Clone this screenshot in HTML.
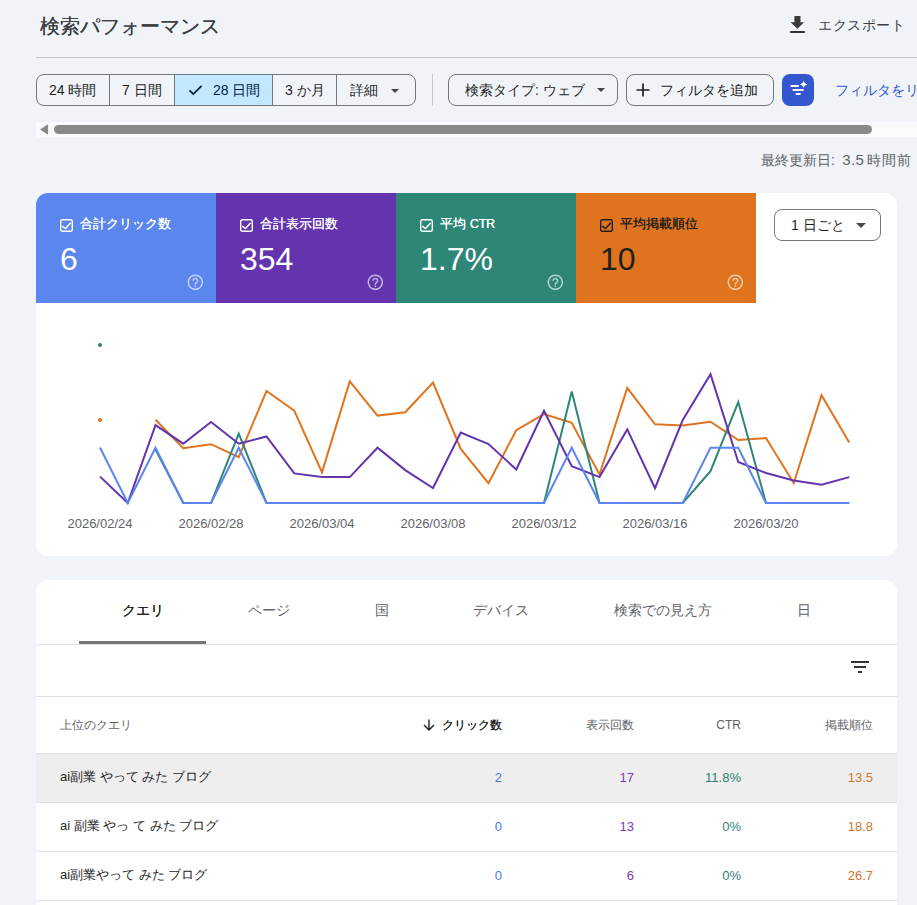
<!DOCTYPE html>
<html><head><meta charset="utf-8">
<style>
*{box-sizing:border-box;margin:0;padding:0}
html,body{width:917px;height:905px;overflow:hidden;background:#f0f4f9;font-family:"Liberation Sans",sans-serif;color:#1f1f1f}
.a{position:absolute;white-space:nowrap}
.title{left:40px;top:14px;font-size:20px;color:#3c4043;line-height:24px;text-shadow:0.3px 0 0 currentColor}
.export{left:818px;top:16px;font-size:14px;color:#3c4043;line-height:18px;letter-spacing:0.6px}
.hr{left:36px;top:57px;width:881px;height:1px;background:#c7c7c7}
.seg{top:74px;height:32px;border:1px solid #747775;border-radius:8px;left:36px;width:380px}
.ct{top:80px;font-size:14px;line-height:20px;color:#1f1f1f}
.chip{top:74px;height:32px;border:1px solid #747775;border-radius:8px;font-size:14px;line-height:30px;color:#1f1f1f}
.tri{position:absolute;width:0;height:0;border-left:5px solid transparent;border-right:5px solid transparent;border-top:5px solid #444746}
.tri.sm{border-left-width:4px;border-right-width:4px;border-top-width:4px}
.card{background:#fff;border-radius:12px}
.m{position:absolute;top:193px;width:180px;height:110px;color:#fff}
.m .lbl{position:absolute;left:43px;top:216px}
.cb{position:absolute;width:13px;height:13px;border:1.5px solid #fff;border-radius:2px}
.hrow{position:absolute;left:36px;width:861px;height:1px;background:#e0e0e0}
.mlbl{top:215px;font-size:13px;line-height:18px;text-shadow:0.45px 0 0 currentColor}
.mnum{top:242px;font-size:32px;line-height:34px}
.tab{top:600px;font-size:14px;line-height:20px;text-align:center;color:#5f6368}
.th{top:717px;font-size:12px;line-height:16px;color:#5f6368}
.td{font-size:13px;line-height:18px;color:#1f1f1f}
.num{font-size:13px;text-align:right}
</style></head><body>
<div class="a title">検索パフォーマンス</div>
<svg class="a" style="left:790px;top:16px" width="15" height="17" viewBox="0 0 15 17"><path d="M4.4 0h6.1v6.2h3.6L7.4 12.7L0.5 6.2h3.9z" fill="#3a3a3a"/><rect x="0.2" y="15" width="14.6" height="2" fill="#333"/></svg>
<div class="a export">エクスポート</div>
<div class="a hr"></div>

<div class="a seg"></div>
<div class="a" style="left:175px;top:75px;width:97px;height:30px;background:#c2e7ff"></div>
<div class="a" style="left:109px;top:75px;width:1px;height:30px;background:#747775"></div>
<div class="a" style="left:174px;top:75px;width:1px;height:30px;background:#747775"></div>
<div class="a" style="left:272px;top:75px;width:1px;height:30px;background:#747775"></div>
<div class="a" style="left:336px;top:75px;width:1px;height:30px;background:#747775"></div>
<div class="a ct" style="left:49px">24 時間</div>
<div class="a ct" style="left:122px">7 日間</div>
<svg class="a" style="left:188px;top:84px" width="15" height="12" viewBox="0 0 15 12"><path d="M1.5 6.3l3.8 3.8L13.6 1.8" fill="none" stroke="#041e49" stroke-width="1.8"/></svg>
<div class="a ct" style="left:213px;color:#041e49">28 日間</div>
<div class="a ct" style="left:285px">3 か月</div>
<div class="a ct" style="left:350px">詳細</div>
<i class="tri sm a" style="left:390.5px;top:88.5px"></i>
<div class="a" style="left:432px;top:74px;width:1px;height:32px;background:#c7c7c7"></div>
<div class="a chip" style="left:448px;width:170px"></div>
<div class="a ct" style="left:465px">検索タイプ: ウェブ</div>
<i class="tri sm a" style="left:597px;top:88px"></i>
<div class="a chip" style="left:626px;width:148px"></div>
<svg class="a" style="left:636px;top:83px" width="14" height="14" viewBox="0 0 14 14"><path d="M7 0.5v13M0.5 7h13" fill="none" stroke="#1f1f1f" stroke-width="1.7"/></svg>
<div class="a ct" style="left:660px">フィルタを追加</div>
<div class="a" style="left:782px;top:74px;width:32px;height:32px;border-radius:8px;background:#3457d0"></div>
<svg class="a" style="left:782px;top:74px" width="32" height="32" viewBox="0 0 32 32"><rect x="8.6" y="11" width="8.2" height="2" fill="#fff"/><rect x="10.6" y="15" width="11" height="1.9" fill="#fff"/><rect x="13.7" y="19" width="4.9" height="2" fill="#fff"/><path d="M21.6 6.6Q22.2 9.8 25.4 10.4Q22.2 11 21.6 14.2Q21 11 17.8 10.4Q21 9.8 21.6 6.6z" fill="#fff"/></svg>
<div class="a ct" style="left:835px;color:#3457d0">フィルタをリセット</div>

<div class="a" style="left:36px;top:122px;width:881px;height:15px;background:#fafafa"></div>
<svg class="a" style="left:39px;top:124px" width="10" height="11" viewBox="0 0 10 11"><path d="M8.5 1.2v8.6L2 5.5z" fill="#8a8a8a" stroke="#8a8a8a" stroke-width="1.2" stroke-linejoin="round"/></svg>
<div class="a" style="left:54px;top:125px;width:818px;height:9px;border-radius:4.5px;background:#8a8a8a"></div>

<div class="a" style="left:761px;top:151px;font-size:14px;line-height:18px;color:#5f6368">最終更新日: <span style="font-size:15px;letter-spacing:0.4px;margin-left:3.5px;margin-right:-1px">3.5</span> <span style="letter-spacing:1.1px">時間前</span></div>

<div class="a card" style="left:36px;top:193px;width:861px;height:363px"></div>
<div class="m" style="left:36px;background:#5a86ee;border-top-left-radius:12px"></div>
<div class="m" style="left:216px;background:#6334ad"></div>
<div class="m" style="left:396px;background:#2d8676"></div>
<div class="m" style="left:576px;background:#e0731d"></div>


<!-- metric cards content -->
<svg class="a" style="left:60px;top:219px" width="13" height="13" viewBox="0 0 13 13"><rect x="0.7" y="0.7" width="11.6" height="11.6" rx="1.6" fill="none" stroke="#fff" stroke-width="1.4"/><path d="M2.3 7.1L5.5 9.6L10.8 3.7" fill="none" stroke="#fff" stroke-width="1.5"/></svg>
<div class="a mlbl" style="left:80px;color:#fff">合計クリック数</div>
<div class="a mnum" style="left:60px;color:#fff">6</div>
<svg class="a" style="left:185.6px;top:272.6px" width="18.7" height="18.7" viewBox="0 0 24 24"><path fill="rgba(255,255,255,.62)" d="M11 18h2v-2h-2v2zm1-16C6.48 2 2 6.48 2 12s4.48 10 10 10 10-4.48 10-10S17.52 2 12 2zm0 18c-4.41 0-8-3.59-8-8s3.59-8 8-8 8 3.59 8 8-3.59 8-8 8zm0-14c-2.21 0-4 1.790-4 4h2c0-1.1.9-2 2-2s2 .9 2 2c0 2-3 1.750-3 5h2c0-2.25 3-2.5 3-5 0-2.21-1.79-4-4-4z"/></svg>

<svg class="a" style="left:240px;top:219px" width="13" height="13" viewBox="0 0 13 13"><rect x="0.7" y="0.7" width="11.6" height="11.6" rx="1.6" fill="none" stroke="#fff" stroke-width="1.4"/><path d="M2.3 7.1L5.5 9.6L10.8 3.7" fill="none" stroke="#fff" stroke-width="1.5"/></svg>
<div class="a mlbl" style="left:260px;color:#fff">合計表示回数</div>
<div class="a mnum" style="left:240px;color:#fff">354</div>
<svg class="a" style="left:365.6px;top:272.6px" width="18.7" height="18.7" viewBox="0 0 24 24"><path fill="rgba(255,255,255,.62)" d="M11 18h2v-2h-2v2zm1-16C6.48 2 2 6.48 2 12s4.48 10 10 10 10-4.48 10-10S17.52 2 12 2zm0 18c-4.41 0-8-3.59-8-8s3.59-8 8-8 8 3.59 8 8-3.59 8-8 8zm0-14c-2.21 0-4 1.790-4 4h2c0-1.1.9-2 2-2s2 .9 2 2c0 2-3 1.750-3 5h2c0-2.25 3-2.5 3-5 0-2.21-1.79-4-4-4z"/></svg>

<svg class="a" style="left:420px;top:219px" width="13" height="13" viewBox="0 0 13 13"><rect x="0.7" y="0.7" width="11.6" height="11.6" rx="1.6" fill="none" stroke="#fff" stroke-width="1.4"/><path d="M2.3 7.1L5.5 9.6L10.8 3.7" fill="none" stroke="#fff" stroke-width="1.5"/></svg>
<div class="a mlbl" style="left:440px;color:#fff">平均 <span style="font-size:12.5px;letter-spacing:-0.2px">CTR</span></div>
<div class="a mnum" style="left:420px;color:#fff">1.7%</div>
<svg class="a" style="left:545.6px;top:272.6px" width="18.7" height="18.7" viewBox="0 0 24 24"><path fill="rgba(255,255,255,.62)" d="M11 18h2v-2h-2v2zm1-16C6.48 2 2 6.48 2 12s4.48 10 10 10 10-4.48 10-10S17.52 2 12 2zm0 18c-4.41 0-8-3.59-8-8s3.59-8 8-8 8 3.59 8 8-3.59 8-8 8zm0-14c-2.21 0-4 1.790-4 4h2c0-1.1.9-2 2-2s2 .9 2 2c0 2-3 1.750-3 5h2c0-2.25 3-2.5 3-5 0-2.21-1.79-4-4-4z"/></svg>

<svg class="a" style="left:600px;top:219px" width="13" height="13" viewBox="0 0 13 13"><rect x="0.7" y="0.7" width="11.6" height="11.6" rx="1.6" fill="none" stroke="#1f1f1f" stroke-width="1.4"/><path d="M2.3 7.1L5.5 9.6L10.8 3.7" fill="none" stroke="#1f1f1f" stroke-width="1.5"/></svg>
<div class="a mlbl" style="left:620px;color:#1f1f1f">平均掲載順位</div>
<div class="a mnum" style="left:600px;color:#1f1f1f">10</div>
<svg class="a" style="left:725.6px;top:272.6px" width="18.7" height="18.7" viewBox="0 0 24 24"><path fill="rgba(255,255,255,.62)" d="M11 18h2v-2h-2v2zm1-16C6.48 2 2 6.48 2 12s4.48 10 10 10 10-4.48 10-10S17.52 2 12 2zm0 18c-4.41 0-8-3.59-8-8s3.59-8 8-8 8 3.59 8 8-3.59 8-8 8zm0-14c-2.21 0-4 1.790-4 4h2c0-1.1.9-2 2-2s2 .9 2 2c0 2-3 1.750-3 5h2c0-2.25 3-2.5 3-5 0-2.21-1.79-4-4-4z"/></svg>

<svg class="a" style="left:0;top:0" width="917" height="560" viewBox="0 0 917 560">
<g fill="none" stroke-width="2" stroke-linejoin="miter" stroke-linecap="butt">
<polyline points="155.50,419.8 183.25,448.3 211.00,444.2 238.75,457.1 266.50,391.0 294.25,410.6 322.00,472.3 349.75,381.4 377.50,415.6 405.25,412.3 433.00,382.5 460.75,449.0 488.50,483.2 516.25,430.2 544.00,414.1 571.75,422.8 599.50,474.5 627.25,387.9 655.00,424.3 682.75,425.4 710.50,421.7 738.25,440.0 766.00,438.0 793.75,483.2 821.50,395.3 849.25,442.4" stroke="#e0731d"/>
<polyline points="155.50,449.6 183.25,503 211.00,503 238.75,433.7 266.50,503 294.25,503 322.00,503 349.75,503 377.50,503 405.25,503 433.00,503 460.75,503 488.50,503 516.25,503 544.00,503 571.75,391.6 599.50,503 627.25,503 655.00,503 682.75,503 710.50,471.2 738.25,402.1 766.00,503 793.75,503 821.50,503 849.25,503" stroke="#2d8676"/>
<polyline points="100.00,476.6 127.75,503 155.50,425.1 183.25,443.7 211.00,421.9 238.75,443.7 266.50,436.5 294.25,473.4 322.00,477.1 349.75,477.1 377.50,447.7 405.25,470.1 433.00,488.0 460.75,432.6 488.50,444.0 516.25,469.5 544.00,410.8 571.75,466.2 599.50,477.1 627.25,429.4 655.00,488.2 682.75,420.0 710.50,374.2 738.25,462.0 766.00,473.0 793.75,480.4 821.50,484.8 849.25,477.1" stroke="#6334ad"/>
<polyline points="100.00,447.5 127.75,503 155.50,447.8 183.25,503 211.00,503 238.75,447.8 266.50,503 294.25,503 322.00,503 349.75,503 377.50,503 405.25,503 433.00,503 460.75,503 488.50,503 516.25,503 544.00,503 571.75,447.7 599.50,503 627.25,503 655.00,503 682.75,503 710.50,447.7 738.25,447.7 766.00,503 793.75,503 821.50,503 849.25,503" stroke="#5a86ee"/>
</g>
<circle cx="100" cy="420" r="2.1" fill="#e0731d"/>
<circle cx="100" cy="345" r="2.1" fill="#2d8676"/>
<g font-family="Liberation Sans" font-size="13" fill="#5f6368" text-anchor="middle">
<text x="100.00" y="528">2026/02/24</text>
<text x="211.00" y="528">2026/02/28</text>
<text x="322.00" y="528">2026/03/04</text>
<text x="433.00" y="528">2026/03/08</text>
<text x="544.00" y="528">2026/03/12</text>
<text x="655.00" y="528">2026/03/16</text>
<text x="766.00" y="528">2026/03/20</text>
</g></svg>
<div class="a chip" style="left:774px;top:209px;width:107px;height:32px"><span style="position:absolute;left:16px">1 日ごと</span><i class="tri" style="left:81px;top:13px"></i></div>

<div class="a card" style="left:36px;top:580px;width:861px;height:340px"></div>

<!-- table -->
<div class="a tab" style="left:79px;width:127px;color:#1f1f1f;text-shadow:0.45px 0 0 currentColor">クエリ</div>
<div class="a tab" style="left:205.5px;width:127px">ページ</div>
<div class="a tab" style="left:332.5px;width:99px">国</div>
<div class="a tab" style="left:430.5px;width:141px">デバイス</div>
<div class="a tab" style="left:571.5px;width:183px">検索での見え方</div>
<div class="a tab" style="left:754.5px;width:99px">日</div>
<div class="a" style="left:79px;top:641px;width:127px;height:3px;background:#757575"></div>
<div class="hrow" style="top:644px"></div>
<svg class="a" style="left:851px;top:660px" width="18" height="14" viewBox="0 0 18 14"><rect x="0" y="1" width="18" height="2" fill="#333"/><rect x="3" y="6" width="12" height="2" fill="#333"/><rect x="7" y="11" width="4" height="2" fill="#333"/></svg>
<div class="hrow" style="top:696px"></div>
<div class="a th" style="left:60px">上位のクエリ</div>
<svg class="a" style="left:423px;top:719px" width="12" height="12" viewBox="0 0 12 12"><path d="M6 0.5v10.3M1 5.9L6 10.9l5-5" fill="none" stroke="#1f1f1f" stroke-width="1.4"/></svg>
<div class="a th" style="right:415px;color:#1f1f1f;text-shadow:0.45px 0 0 currentColor">クリック数</div>
<div class="a th" style="right:283px">表示回数</div>
<div class="a th" style="right:176px">CTR</div>
<div class="a th" style="right:44px">掲載順位</div>
<div class="hrow" style="top:753px"></div>
<div class="a" style="left:36px;top:754px;width:861px;height:48px;background:#eeeeee"></div>
<div class="hrow" style="top:802px"></div>
<div class="hrow" style="top:851px"></div>
<div class="hrow" style="top:900px"></div>
<div class="a td" style="left:60px;top:768px">ai副業 やって みた ブログ</div>
<div class="a td" style="right:415px;top:769px;color:#4677dd">2</div>
<div class="a td" style="right:283px;top:769px;color:#7b3bb5">17</div>
<div class="a td" style="right:176px;top:769px;color:#2d8070">11.8%</div>
<div class="a td" style="right:44px;top:769px;color:#cf772c">13.5</div>
<div class="a td" style="left:60px;top:817px">ai 副業 やっ て みた ブログ</div>
<div class="a td" style="right:415px;top:818px;color:#4677dd">0</div>
<div class="a td" style="right:283px;top:818px;color:#7b3bb5">13</div>
<div class="a td" style="right:176px;top:818px;color:#2d8070">0%</div>
<div class="a td" style="right:44px;top:818px;color:#cf772c">18.8</div>
<div class="a td" style="left:60px;top:866px">ai副業やって みた ブログ</div>
<div class="a td" style="right:415px;top:867px;color:#4677dd">0</div>
<div class="a td" style="right:283px;top:867px;color:#7b3bb5">6</div>
<div class="a td" style="right:176px;top:867px;color:#2d8070">0%</div>
<div class="a td" style="right:44px;top:867px;color:#cf772c">26.7</div>
</body></html>
